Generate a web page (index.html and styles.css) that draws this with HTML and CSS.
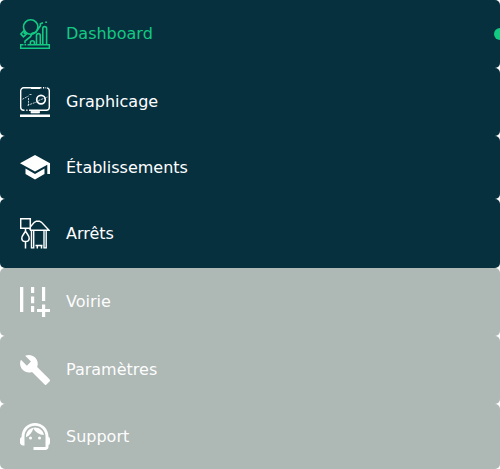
FILE: index.html
```
<!DOCTYPE html>
<html lang="fr">
<head>
<meta charset="utf-8">
<title>Menu</title>
<link rel="stylesheet" href="styles.css">
</head>
<body>
<nav class="menu">
  <a class="item active">
    <svg class="icon" width="30" height="30" viewBox="0 0 30 30" fill="none" stroke="currentColor" stroke-width="1.600">
      <circle cx="10.700" cy="8" r="7.200"/>
      <path d="M5.500 13.200 3.800 14.900M3.500 12.200.9 15l2.600 2.800 2.900-2.800zM5 24.200v-2l5.500-4.500 1.700-3.400 3.600-1 4.600-6.500v-2l2.600-1M25.200 3.200h1.800"/>
      <path d="M10.400 25v-1.300a2 2 0 0 1 4 0V25M16.500 25V16.500a1.900 1.900 0 0 1 3.800 0V25M22.800 25V9.500a1.900 1.900 0 0 1 3.800 0V25"/>
      <path d="M3.500 25.700H.7v3.500h28.600v-3.500H7.500M4.500 25.700h1.700" stroke-width="1.400"/>
    </svg>
    <span>Dashboard</span>
    <i class="dot"></i>
  </a>
  <a class="item">
    <svg class="icon" width="30" height="30" viewBox="0 0 30 30" fill="none" stroke="currentColor" stroke-width="1.400">
      <path d="M21.500.8H3.700a3 3 0 0 0-3 3v16.500a3 3 0 0 0 3 3h.8M6.300 23.300h1.200M9 23.300h17.300a3 3 0 0 0 3-3V3.800a3 3 0 0 0-2.300-2.900M23 .8h1.200M25.500.8h.7"/>
      <path d="M11 1.200h9" stroke-width="1.800"/>
      <circle cx="21" cy="12.600" r="4.300" stroke-width="1.700"/>
      <path d="m2.500 12.200 6-3.200M9.500 7.500h2M8.500 11v7.500M7.500 18.300l11-4M18.500 13.500l9-3.500" stroke-width="1" stroke-dasharray="2 .8" opacity=".75"/>
      <path d="M11 24.300h8.500v1.600H11z" fill="currentColor" stroke-width=".8"/>
      <path d="M0 28.800h30" stroke-width="2.400"/>
    </svg>
    <span>Graphicage</span>
  </a>
  <a class="item item-schools">
    <svg class="icon" width="30" height="25" viewBox="0 0 30 25" fill="currentColor">
      <path d="M5.500 13.600v5.500L15 24.500l9.500-5.400v-5.500L15 18.900zM15 0 0 8.200l15 8.200 12.300-6.700v9.400H30V8.200z"/>
    </svg>
    <span>Établissements</span>
  </a>
  <a class="item item-stops">
    <svg class="icon" width="30" height="31" viewBox="0 0 30 31" fill="none" stroke="currentColor" stroke-width="1.500">
      <path d="M.7.7h9.600v9.600H.7zM5.500 10.500v2.500M5.500 13c-1 2.500-3.700 4.500-3.700 7.200 0 2 1.500 3.300 3.700 3.300s3.700-1.300 3.700-3.300c0-2.700-2.700-4.700-3.700-7.200zM5.500 23v7.500"/>
      <path d="M10 12.200h19L21.500 4.300l-2-1.100h-3.200l-2 1.100L10.700 8.500M11 12.200l-1.500-1M11.500 12.500v18M13.700 12.500v18M24 12.500v18M26.200 12.500v18M11 29.900h3M24 29.900h2.500" stroke-width="1.400"/>
      <path d="M15.500 27.400h7M17.300 27.500v3M21.500 27.500v3"/>
    </svg>
    <span>Arrêts</span>
  </a>
  <a class="item disabled">
    <svg class="icon" width="30" height="30" viewBox="0 0 30 30" fill="currentColor">
      <path d="M0 0h3.300v25H0zM11 0h3.200v6H11zM11 9.500h3.200v6.700H11zM11 19h3.200v6H11zM22 0h3.200v14H22zM22 17.500h3.200v4.400H30v3.200h-4.800V30H22v-4.900h-5v-3.200h5z"/>
    </svg>
    <span>Voirie</span>
  </a>
  <a class="item disabled">
    <svg class="icon" width="30" height="30" viewBox="0.900 1.100 22.200 22.200" fill="currentColor">
      <path d="M22.700 19l-9.100-9.100c.9-2.300.4-5-1.500-6.900-2-2-5-2.400-7.400-1.300L9 6 6 9 1.600 4.700C.4 7.100.9 10.100 2.900 12.100c1.900 1.900 4.600 2.400 6.900 1.500l10 10 3.400-3.400z"/>
    </svg>
    <span>Paramètres</span>
  </a>
  <a class="item item-support disabled">
    <svg class="icon" width="30" height="27" viewBox="2 3 20 18" fill="currentColor">
      <path d="M21 12.220C21 6.730 16.740 3 12 3c-4.690 0-9 3.650-9 9.280-.6.340-1 .98-1 1.720v2c0 1.100.9 2 2 2h1v-6.100c0-3.870 3.130-7 7-7s7 3.130 7 7V19h-8v2h8c1.100 0 2-.9 2-2v-1.220c.59-.31 1-.92 1-1.640v-2.300c0-.7-.41-1.310-1-1.620z"/>
      <circle cx="9" cy="13" r="1"/><circle cx="15" cy="13" r="1"/>
      <path d="M18 11.030C17.520 8.180 15.040 6 12.050 6c-3.030 0-6.290 2.510-6.030 6.450 2.470-1.010 4.330-3.210 4.860-5.890 1.310 2.630 4 4.440 7.120 4.470z"/>
    </svg>
    <span>Support</span>
  </a>
</nav>
</body>
</html>
```
FILE: styles.css
```
* { box-sizing: border-box; }
body {
  margin: 0;
  background: #fff;
  font: 16px/24px "DejaVu Sans", sans-serif;
}
.menu {
  display: flex;
  flex-direction: column;
}
.item {
  position: relative;
  display: flex;
  align-items: center;
  gap: 16px;
  height: 68px;
  padding: 0 20px;
  border-radius: 5px;
  overflow: hidden;
  background: #07303f;
  color: #fff;
}
.icon { flex: none; }
.active { color: #13ca83; }
.dot {
  position: absolute;
  right: -6px;
  top: 28px;
  width: 12px;
  height: 12px;
  border-radius: 50%;
  background: #13ca83;
}
.item-schools { height: 63px; }
.item-stops { height: 69px; }
.item-support { height: 65px; }
.disabled { background: #aeb8b5; }
.disabled span { color: #fdfdfd; }
```
